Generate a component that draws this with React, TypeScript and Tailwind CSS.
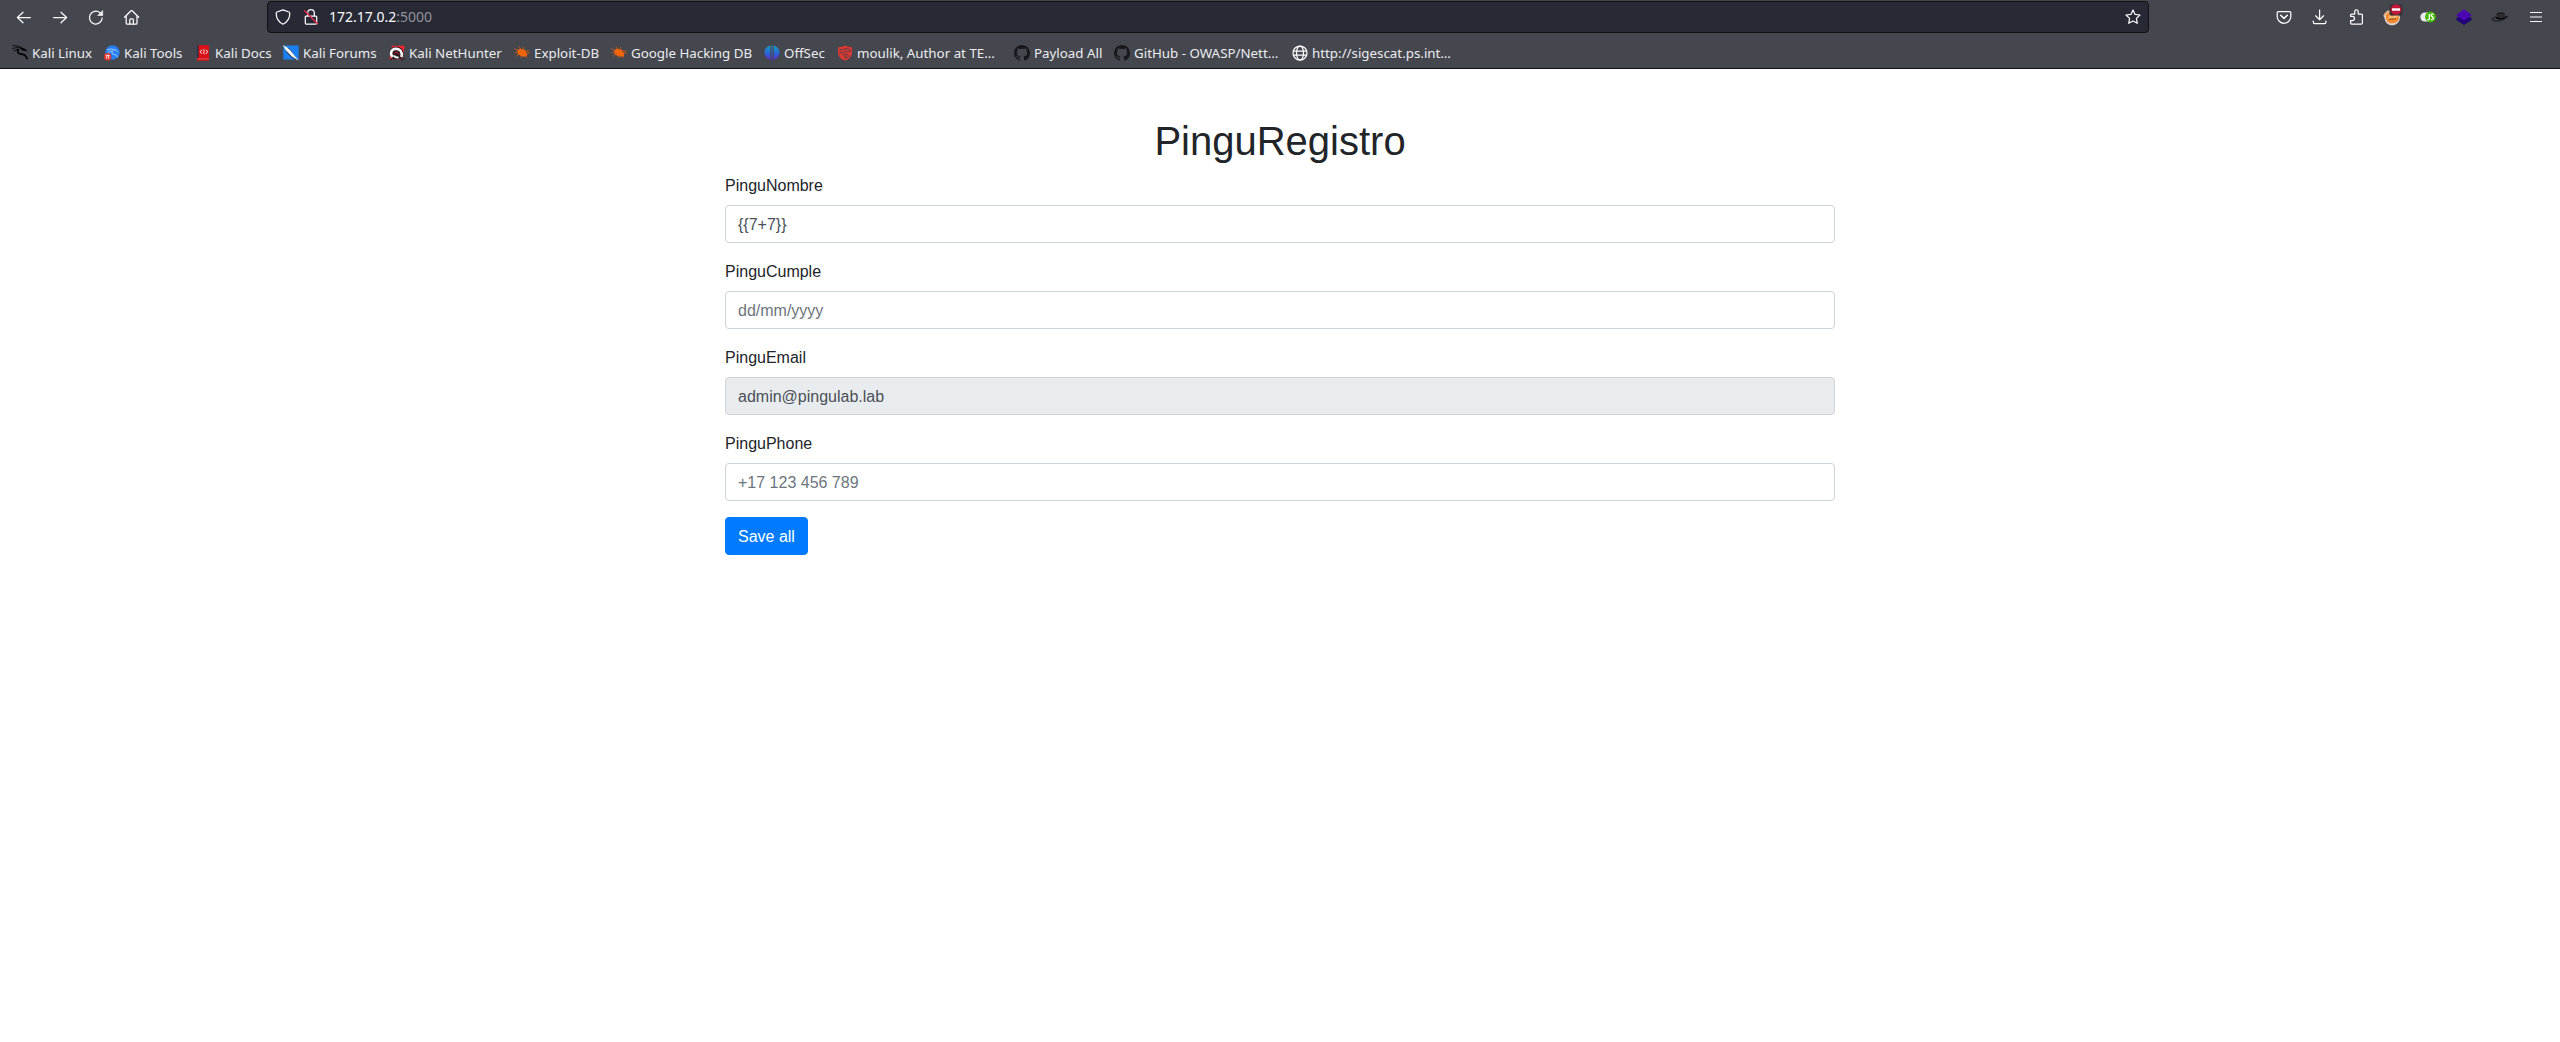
import type { ReactNode } from "react";

function Icon({ children, size = 16 }: { children: ReactNode; size?: number }) {
  return (
    <svg
      width={size}
      height={size}
      viewBox="0 0 16 16"
      fill="none"
      stroke="#fbfbfe"
      strokeWidth="1.25"
      strokeLinecap="round"
      strokeLinejoin="round"
      className="block shrink-0 overflow-visible"
    >
      {children}
    </svg>
  );
}

const Back = () => (
  <Icon>
    <path d="M14.4 8.500H1.500M7 3.200 1.400 8.500 7 13.800" />
  </Icon>
);
const Forward = () => (
  <Icon>
    <path d="M1.600 8.500h12.900M9 3.200l5.600 5.300L9 13.800" />
  </Icon>
);
const Reload = () => (
  <Icon>
    <path d="M14.2 9A6.400 6.400 0 1 1 11.800 3.600" />
    <path d="M14.700 1.800v4.700H10z" fill="#fbfbfe" strokeWidth="0.6" />
  </Icon>
);
const Home = () => (
  <Icon>
    <path d="M.500 8.300 7 1.800a.9.9 0 0 1 1.200 0l6.500 6.500M2.200 6.900v7.300c0 .6.4 1 1 1H12c.6 0 1-.4 1-1V6.900" />
    <path d="M5.800 15.100v-4.200c0-.6.4-1 1-1h1.600c.6 0 1 .4 1 1v4.200" />
  </Icon>
);
const Shield = () => (
  <Icon>
    <path d="M8 .8 14 3c.5.2.8.6.8 1.100C14.800 9.500 12.300 13.300 8 15.200 3.700 13.300 1.200 9.500 1.200 4.100c0-.5.3-.9.8-1.100z" />
  </Icon>
);
const LockOff = () => (
  <Icon>
    <path d="M4.700 7V4a3.300 3.300 0 0 1 6.600 0v3M3.200 7h9.600c.5 0 .9.4.9.9v6.200c0 .5-.4.9-.9.9H3.200c-.5 0-.9-.4-.9-.9V7.900c0-.5.4-.9.9-.9z" />
    <path d="m1.600 1.800 13 13" stroke="#e22850" strokeWidth="1.500" />
  </Icon>
);
const Star = () => (
  <Icon>
    <path d="m8 1 2.100 4.400 4.900.6-3.600 3.400.9 4.900L8 12l-4.300 2.300.9-4.900L1 6l4.900-.6z" />
  </Icon>
);
const Pocket = () => (
  <Icon>
    <path d="M2.200 2.600h11.600c.6 0 1 .4 1 1V7.500a6.800 6.800 0 0 1-13.600 0V3.600c0-.6.4-1 1-1z" />
    <path d="m4.700 6.300 3.300 3.100 3.300-3.100" strokeWidth="1.500" />
  </Icon>
);
const Download = () => (
  <Icon>
    <path d="M7.600 1v9.500M3.600 6.800l4 3.900 4-3.900M1.300 12v1.300c0 .8.6 1.400 1.400 1.400h9.800c.8 0 1.400-.6 1.400-1.400V12" />
  </Icon>
);
const Puzzle = () => (
  <Icon>
    <path d="M2.600 7.400V6c0-.6.4-1 1-1h3.100V2.600a1.750 1.750 0 0 1 3.500 0V5h3.200c.6 0 1 .4 1 1v8c0 .6-.4 1-1 1H3.600c-.6 0-1-.4-1-1v-2.400h1.800a2 2 0 0 0 0-4.200z" />
  </Icon>
);
const Fox = () => (
  <svg width="22" height="22" viewBox="0 0 22 22" className="block overflow-visible">
    <path d="M3 8 6.500 4.500 17 6l2 5c0 5-3.500 8.300-8 8.300S4 16.300 3.500 12L2.500 10z" fill="#ddd0c8" />
    <path d="m5 8.500 3-2 9 2 1 3.500c-.5 3.500-3.500 5.200-7 5.200S5.500 15.500 5 12.500z" fill="#f58a2c" />
    <path d="m8 9 3 1.500L17 8l-.5 3-3 1.500-2.500-.5-3.500 1z" fill="#ffbd75" />
    <path d="m8 13.500 2-.6 1 .7 2-.9 2 .3" fill="none" stroke="#673720" strokeWidth=".8" />
    <path d="M3 10 4.500 7 9 5" fill="none" stroke="#f59b4e" />
    <rect x="8.500" y="-1.500" width="13" height="11" rx="1.500" fill="#343437" />
    <circle cx="15" cy="3.500" r="5.300" fill="#c51738" />
    <path d="M11 3.500h8" stroke="#fff" strokeWidth="2.400" />
  </svg>
);
const JsToggle = () => (
  <svg width="16" height="16" viewBox="0 0 16 16" className="block overflow-visible">
    <rect x=".3" y="3.500" width="13" height="9" rx="4.500" fill="#e9e9e9" />
    <circle cx="10.500" cy="8" r="5.400" fill="#41b800" />
    <path
      d="M9.300 5v4.800c0 1.100-1.100 1.300-2 .8M13.500 5.400c-2.800-.7-3 1.600-1.300 2.300 2 .8 1.300 3.500-1.100 2.600"
      fill="none"
      stroke="#fff"
      strokeWidth="1.300"
    />
  </svg>
);
const Layers = () => (
  <svg width="16" height="16" viewBox="0 0 16 16" className="block">
    <path d="M.2 10 3 7h10l2.800 3v.800L8 15.900.2 10.800z" fill="#22007a" />
    <path d="M8 .2 15.800 6.300 8 11.500.2 6.300z" fill="#4b05b5" />
  </svg>
);
const Hat = () => (
  <svg width="16" height="16" viewBox="0 0 16 16" className="block overflow-visible">
    <path d="M4.300 9 4.600 4.700c2-1.100 6-1.100 8.100-.5L13 9c-2 1.200-6 1.400-8.700 0z" fill="#2b2d32" />
    <path d="M4.600 5c2-1.200 6-1.200 8-.5" stroke="#0c0d0f" fill="none" strokeWidth=".9" />
    <path d="M3.800 7.900C1 8.500-.2 10 .6 11.200c2.500 1.800 10.800 1 15-3.700-1-.2-1.900.1-2.600.5" fill="none" stroke="#0c0d0f" strokeWidth=".9" />
    <path d="M4 8.700c2.500 1.400 6.300 1.300 9-.2" fill="none" stroke="#000" strokeWidth="1.400" />
  </svg>
);
const Menu = () => (
  <Icon>
    <path d="M2.500 3.500h11M2.500 8h11M2.500 12.500h11" strokeWidth="1.200" />
  </Icon>
);

function Fav({ children }: { children: ReactNode }) {
  return (
    <svg width="16" height="16" viewBox="0 0 16 16" className="block shrink-0 overflow-visible">
      {children}
    </svg>
  );
}
const KaliDragon = () => (
  <Fav>
    <path d="M.3.800C4 .4 7.500 1 10 2.800M.2 3.800C3.500 2.300 6.800 2.300 9.800 3.400M1.500 6.200c2-1.400 3.800-1.700 5.800-1.500" fill="none" stroke="#000" strokeWidth=".8" />
    <path d="M6.500 4c-1.600 2-.9 4.300 1.600 4.800 3.200.5 5.800.8 7.300 5.500" fill="none" stroke="#000" strokeWidth="1.700" />
    <path d="M8 3c3-.5 4.500.2 7 2.700l-.4.700c-1.800-.7-2.900-1-4.600-1z" fill="#000" />
  </Fav>
);
const KaliTools = () => (
  <Fav>
    <circle cx="8.500" cy="7.500" r="7.200" fill="#267ff4" />
    <path d="M3 5c3-1.500 6-1 8 .2M4 7.500c2-1.300 3-1.500 4.500-1.400-1.300 1.800-.2 3 1.700 3.300 2 .4 3 1.200 3.500 3M10 5c2 0 3 .7 4 2.200" fill="none" stroke="#a8d0ff" strokeWidth="1" />
    <circle cx="3.600" cy="11.800" r="3.700" fill="#e5322d" />
    <path d="M1.700 10.300h3.800M2.700 10.300v3.300M4.600 10.300v3.300" stroke="#fff" strokeWidth=".9" />
  </Fav>
);
const KaliDocs = () => (
  <Fav>
    <path d="M2 .2h12v15.500H2z" fill="#d91016" />
    <path d="M2 .2h1.500V13H2z" fill="#26304f" />
    <path d="M2.500 13.400H14v1H2.500z" fill="#d95a57" />
    <path d="M6.800 4.700 5.200 6.700 6.800 8.700M11 4.700l1.600 2L11 8.700M8.200 4.500C11 6 7 7 9.800 9.300" fill="none" stroke="#fff" strokeWidth="1" />
  </Fav>
);
const KaliForums = () => (
  <Fav>
    <path d="M.3.500h15.400v14H.3z" fill="#1c80f5" />
    <path d="m1.200 3.300 3.600 5.500 3.600 3.500 6 3.300L8.500 8 5 3.800z" fill="#23272f" />
    <path d="M0 .300 3.800 2.300l4 3 2.600 4 5.400 6.500-7-4.300-3-2.900L2.500 5z" fill="#f6f7f9" />
    <path d="m5.200 3.300 2.600 2 1.700 2.600" stroke="#23272f" fill="none" strokeWidth=".6" />
  </Fav>
);
const NetHunter = () => (
  <Fav>
    <path d="M3 .8h12.700l-2.500 13.500H.4z" fill="#f3232f" />
    <path d="M.3 8C.5 3 4.500 1.500 8 1.800c5 .5 7.200 4 6 9L12 14H9l-2.500.8L3 13.500z" fill="#2a1c22" />
    <path d="M3.700 12C.2 8.300 2.700 3.900 6.800 3.700c4.400 0 7 3.800 5.600 8.300" fill="none" stroke="#fff" strokeWidth="2.500" />
    <path d="M5.400 10.200C5 12 7.500 13 9.500 12.300" fill="none" stroke="#fff" strokeWidth="2" />
    <path d="M5.500 9C5.400 6.500 9.500 6.500 9.800 9.600" fill="none" stroke="#d71c2d" />
    <path d="m1 14.800 2.500-1.300M12 15l3.500-1.500" stroke="#15171b" />
  </Fav>
);
const ExploitBug = () => (
  <Fav>
    <path d="M3.300 5.500C5 2.700 9 3.500 11 5.500c2 1.700 3 4.500 1.700 5.800C10 12.500 5 11 3.500 8.500z" fill="#f2650b" />
    <path d="M.2 3.500 4 5.700M5 1.500l2 3M9.500 2l.4 3M11 5.500l4.500.7M12 8h4M3.500 7 .8 8M5 9l-3 2.300M7.500 10.500 7 13M11 10.500l2 2.500" stroke="#d85c15" strokeWidth=".8" fill="none" />
  </Fav>
);
const OffSec = () => (
  <Fav>
    <defs>
      <linearGradient id="offsec" x1="0" y1="0" x2="0" y2="1">
        <stop offset="0" stopColor="#16a0c4" />
        <stop offset=".5" stopColor="#2869d4" />
        <stop offset="1" stopColor="#6420dc" />
      </linearGradient>
    </defs>
    <path d="M6.300.500v14C2.500 13 .4 11 .4 7.500S2.800 1.700 6.300.5zM9.700.500v14c3.800-1.500 5.900-3.500 5.900-7S13.200 1.700 9.700.5zM7.500.200h1v15.600h-1z" fill="url(#offsec)" />
  </Fav>
);
const RedDragon = () => (
  <Fav>
    <path d="M1 2.200C3.800 2.300 5.800 1.500 8 .5c2.200 1 4.200 1.700 7 1.700V7c0 4.500-2.500 7-7 8.500C3.500 14 1 11.500 1 7z" fill="#df3831" />
    <path d="M2 4.500c3 1 5-.8 8-.8 2 0 3 1 4 2.500l-4 .2C8 6 6 7.500 7 8.300c2 1.300 4.500.7 4.500 3-.6 1.800-3 1.800-4.500 1.200 1.500 0 2.500-.4 2.500-1.300C6.500 10.500 4 9.500 5 7L2 8" fill="none" stroke="#51404a" strokeWidth=".9" />
  </Fav>
);
const GitHub = () => (
  <Fav>
    <path
      fill="#17191c"
      d="M8 0C3.580 0 0 3.580 0 8c0 3.540 2.290 6.530 5.470 7.590.4.070.55-.17.55-.38 0-.19-.01-.82-.01-1.490-2.010.37-2.530-.49-2.690-.94-.09-.23-.48-.94-.82-1.130-.28-.15-.68-.52-.01-.53.63-.01 1.080.58 1.230.82.72 1.210 1.870.87 2.330.66.07-.52.28-.87.51-1.070-1.780-.2-3.640-.89-3.640-3.950 0-.87.31-1.590.82-2.150-.08-.2-.36-1.020.08-2.120 0 0 .67-.21 2.200.82.64-.18 1.320-.27 2-.27s1.360.09 2 .27c1.530-1.040 2.200-.82 2.200-.82.44 1.100.16 1.920.08 2.120.51.56.82 1.270.82 2.150 0 3.070-1.870 3.750-3.650 3.950.29.25.54.73.54 1.480 0 1.070-.01 1.930-.01 2.200 0 .21.15.46.55.38A8.010 8.010 0 0 0 16 8c0-4.420-3.580-8-8-8z"
    />
  </Fav>
);
const Globe = () => (
  <Icon>
    <circle cx="8" cy="8" r="7" />
    <ellipse cx="8" cy="8" rx="3.500" ry="7" />
    <path d="M1.500 6h13M1.500 10.200h13" />
  </Icon>
);

const bookmarks: { label: string; icon: ReactNode; width: string }[] = [
  { label: "Kali Linux", icon: <KaliDragon />, width: "w-[92px]" },
  { label: "Kali Tools", icon: <KaliTools />, width: "w-[91px]" },
  { label: "Kali Docs", icon: <KaliDocs />, width: "w-[88px]" },
  { label: "Kali Forums", icon: <KaliForums />, width: "w-[106px]" },
  { label: "Kali NetHunter", icon: <NetHunter />, width: "w-[125px]" },
  { label: "Exploit-DB", icon: <ExploitBug />, width: "w-[97px]" },
  { label: "Google Hacking DB", icon: <ExploitBug />, width: "w-[153px]" },
  { label: "OffSec", icon: <OffSec />, width: "w-[73px]" },
  { label: "moulik, Author at TE…", icon: <RedDragon />, width: "w-[177px]" },
  { label: "Payload All", icon: <GitHub />, width: "w-[100px]" },
  { label: "GitHub - OWASP/Nett…", icon: <GitHub />, width: "w-[178px]" },
  { label: "http://sigescat.ps.int…", icon: <Globe />, width: "w-[180px]" },
];

function ToolButton({ label, children }: { label: string; children: ReactNode }) {
  return (
    <button aria-label={label} className="flex h-[34px] w-9 shrink-0 items-center justify-center">
      {children}
    </button>
  );
}

function Field({ label, value, placeholder, readOnly }: { label: string; value?: string; placeholder?: string; readOnly?: boolean }) {
  return (
    <label className="mb-4 block">
      <span className="mb-[7px] block pt-px">{label}</span>
      <input
        defaultValue={value}
        placeholder={placeholder}
        readOnly={readOnly}
        className="block h-[38px] w-full rounded border border-[#ced4da] bg-white px-3 pt-[7px] pb-[5px] text-[#495057] outline-none placeholder:text-[#6c757d] placeholder:opacity-100 read-only:bg-[#e9ecef]"
      />
    </label>
  );
}

export default function App() {
  return (
    <div className="flex h-[1042px] w-full flex-col overflow-hidden bg-white">
      <header className="h-[69px] shrink-0 border-b border-[#0f1014] bg-[#44474e] font-['Noto_Sans',sans-serif] text-[#fbfbfe]">
        <div className="flex h-[34px] items-center px-1.5">
          <ToolButton label="Back"><Back /></ToolButton>
          <ToolButton label="Forward"><Forward /></ToolButton>
          <ToolButton label="Reload"><Reload /></ToolButton>
          <ToolButton label="Home"><Home /></ToolButton>
          <div className="mx-[117px] flex h-8 flex-1 items-center rounded border border-[#0f1014] bg-[#272934] px-[7px]">
            <Shield />
            <div className="ml-3"><LockOff /></div>
            <div className="ml-2.5 flex-1 text-[14px] leading-5">
              172.17.0.2<span className="text-[#93949b]">:5000</span>
            </div>
            <Star />
          </div>
          <ToolButton label="Pocket"><Pocket /></ToolButton>
          <ToolButton label="Downloads"><Download /></ToolButton>
          <ToolButton label="Extensions"><Puzzle /></ToolButton>
          <ToolButton label="FoxyProxy"><Fox /></ToolButton>
          <ToolButton label="JavaScript toggle"><JsToggle /></ToolButton>
          <ToolButton label="Layers"><Layers /></ToolButton>
          <ToolButton label="Hat"><Hat /></ToolButton>
          <ToolButton label="Menu"><Menu /></ToolButton>
        </div>
        <nav className="flex h-[34px] items-center pt-1 pl-3">
          {bookmarks.map((b) => (
            <div key={b.label} className={`flex shrink-0 items-center gap-1 text-[13.33px] leading-5 whitespace-nowrap text-[#ececf0] ${b.width}`}>
              {b.icon}
              <span>{b.label}</span>
            </div>
          ))}
        </nav>
      </header>
      <main className="mx-auto w-[1140px] px-[15px] pt-12 font-['Liberation_Sans',sans-serif] text-base leading-6 text-[#212529]">
        <h1 className="mb-2 text-center text-[40px] leading-[48px] font-medium">PinguRegistro</h1>
        <form>
          <Field label="PinguNombre" value="{{7+7}}" />
          <Field label="PinguCumple" placeholder="dd/mm/yyyy" />
          <Field label="PinguEmail" value="admin@pingulab.lab" readOnly />
          <Field label="PinguPhone" placeholder="+17 123 456 789" />
          <button type="button" className="h-[38px] rounded border border-[#007bff] bg-[#007bff] px-3 pt-0.5 text-white">
            Save all
          </button>
        </form>
      </main>
    </div>
  );
}
